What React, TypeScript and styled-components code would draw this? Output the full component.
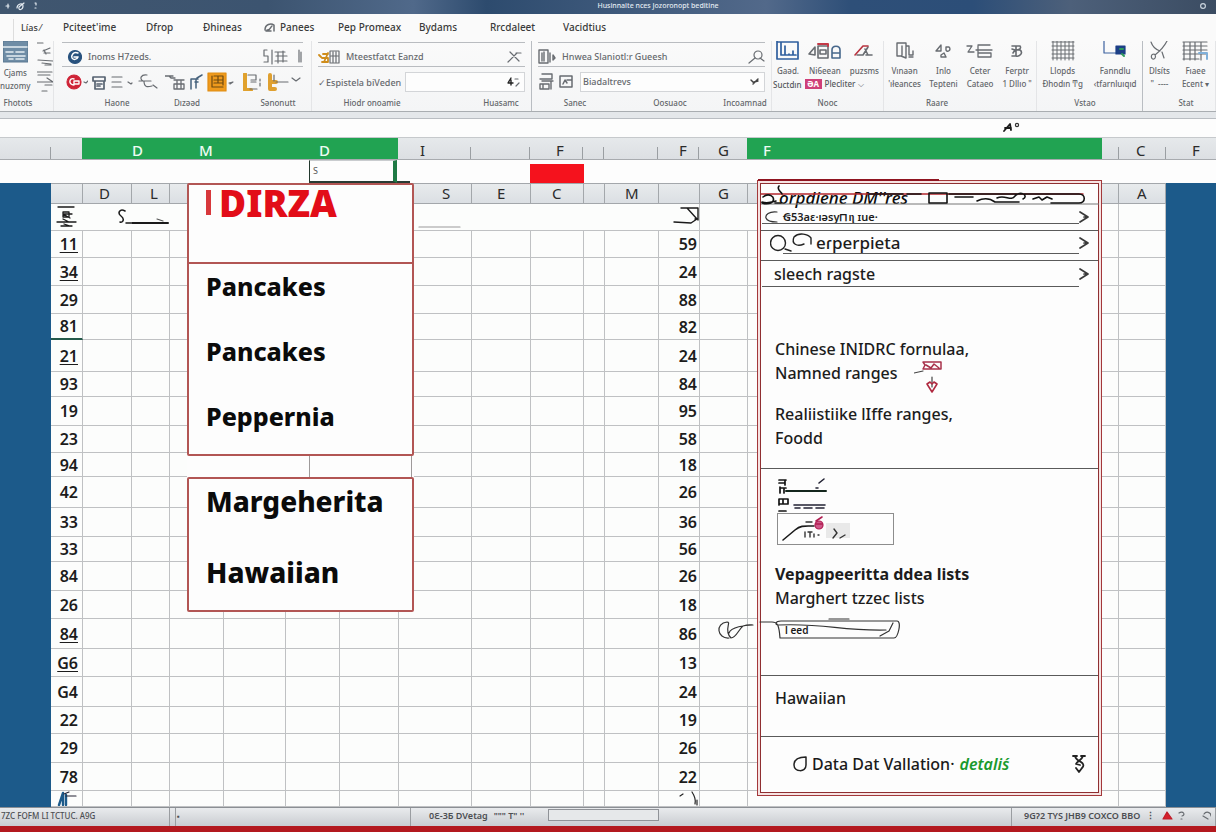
import React from "react";
import styled, { createGlobalStyle } from "styled-components";

const Global = createGlobalStyle`
  * { box-sizing: border-box; }
  body { margin: 0; background: #fcfcfc; font-family: "Noto Sans", "Open Sans", sans-serif; color: #1a1a1a; }
  button, input { font: inherit; color: inherit; }
  svg { display: block; }
`;

const Page = styled.div`
  display: flex;
  flex-direction: column;
  min-height: 100vh;
  overflow: hidden;
`;

/* ---------- title bar ---------- */
const TitleBar = styled.header`
  height: 14px;
  display: flex;
  align-items: center;
  justify-content: space-between;
  padding: 0 8px 2px 4px;
  background: linear-gradient(90deg, #40566f 0, #3c5470 22%, #50698a 34%, #2d4b6e 40%, #3d587a 50%, #52698a 63%, #2e4f78 70%, #2c4e78 80%, #4d607a 88%, #3b4c62 100%);
  color: #e4ebf2;
`;
const TitleText = styled.h1`
  flex: 1;
  margin: 0;
  padding-left: 80px;
  text-align: center;
  font-size: 7px;
  line-height: 12px;
  font-weight: 500;
`;

/* ---------- ribbon ---------- */
const Tabs = styled.nav`
  display: grid;
  grid-template-columns: 14px 49px 83px 57px 61px 74px 81px 71px 73px 1fr;
  height: 27px;
  align-items: center;
  background: #fafafa;
`;
const Tab = styled.button<{ $faint?: boolean }>`
  display: flex;
  align-items: center;
  gap: 4px;
  padding: 0 0 0 ${(p) => (p.$faint ? 7 : 0)}px;
  border: 0;
  background: none;
  text-align: left;
  white-space: nowrap;
  font-size: ${(p) => (p.$faint ? 9 : 10)}px;
  line-height: 27px;
  font-weight: 500;
  color: #3a3a3a;
`;
const TabEdge = styled.span`
  height: 22px;
  border-right: 1px solid #ddd;
  align-self: end;
`;

const Ribbon = styled.section`
  display: flex;
  height: 71px;
  background: linear-gradient(#fafafa, #f4f5f6);
  border-bottom: 1px solid #a9adb1;
`;
const Group = styled.div<{ $w?: number; $line?: boolean }>`
  flex: ${(p) => (p.$w ? `0 0 ${p.$w}px` : "1 1 0")};
  min-width: 0;
  display: flex;
  flex-direction: column;
  border-right: 1px solid ${(p) => (p.$line ? "#b9bdc2" : "#e4e5e7")};
  overflow: hidden;
`;
const Body = styled.div<{ $pad?: number }>`
  height: 55px;
  padding: 1px ${(p) => p.$pad ?? 6}px 0;
  display: flex;
  flex-direction: column;
  gap: 4px;
`;
const Captions = styled.div<{ $cols?: string; $lead?: number }>`
  display: grid;
  grid-template-columns: ${(p) => p.$cols ?? "1fr"};
  padding-left: ${(p) => p.$lead ?? 0}px;
  text-align: center;
  font-size: 8px;
  line-height: 16px;
  font-weight: 500;
  color: #63666a;
  white-space: nowrap;
`;
const Line = styled.div<{ $box?: boolean }>`
  display: flex;
  align-items: center;
  gap: 4px;
  height: ${(p) => (p.$box ? 25 : 22)}px;
  padding-top: ${(p) => (p.$box ? 4 : 0)}px;
  border: 0 solid #b9bcc0;
  border-width: ${(p) => (p.$box ? "1px 0" : "0")};
  font-size: 9px;
  font-weight: 500;
  color: #66696d;
  white-space: nowrap;
`;
const Field = styled.input`
  flex: 1;
  width: 0;
  min-width: 0;
  height: 18px;
  padding: 0 2px;
  border: 0;
  background: transparent;
  font-size: 9px;
  line-height: 18px;
`;
const FieldBox = styled.div`
  flex: 1;
  min-width: 0;
  display: flex;
  align-items: center;
  height: 20px;
  padding-right: 3px;
  border: 1px solid #d3d5d8;
  background: #fdfdfd;
`;
const Tool = styled.button`
  flex: none;
  display: flex;
  padding: 0;
  border: 0;
  background: none;
`;
const BigTools = styled.div<{ $short?: boolean }>`
  display: flex;
  justify-content: space-around;
  height: ${(p) => (p.$short ? 37 : 55)}px;
`;
const BigTool = styled.button`
  display: flex;
  flex-direction: column;
  align-items: center;
  padding: 0;
  border: 0;
  background: none;
  font-size: 8px;
  line-height: 13px;
  font-weight: 500;
  color: #63666a;
  white-space: nowrap;
  & > svg { margin-bottom: 3px; }
`;
const SubLine = styled.div`
  display: flex;
  align-items: center;
  gap: 3px;
  height: 18px;
  padding: 0 0 4px 1px;
  font-size: 8px;
  font-weight: 500;
  color: #55585c;
  white-space: nowrap;
`;
const Pink = styled.span`
  width: 17px;
  height: 10px;
  background: #cf3f78;
  color: #fff;
  line-height: 10px;
  text-align: center;
  font-weight: 700;
`;
const Clip = styled.div`
  display: flex;
  gap: 6px;
  height: 55px;
`;

/* ---------- sheet ---------- */
const Strip = styled.div`
  height: 7px;
  background: #e4e7ea;
  border-bottom: 1px solid #b9bdc2;
`;
const FormulaBar = styled.div`
  display: flex;
  justify-content: flex-end;
  height: 19px;
  padding-right: 196px;
  background: #fdfdfd;
  border-bottom: 1px solid #c6c9cc;
`;
const TopHeads = styled.div`
  display: flex;
  height: 22px;
  background: linear-gradient(#e6e9eb, #dcdfe3);
  border-bottom: 1px solid #a8abaf;
`;
const TopHead = styled.div<{ $w?: number; $inset?: number; $green?: boolean; $tick?: boolean }>`
  flex: ${(p) => (p.$w ? `0 0 ${p.$w}px` : "1 1 0")};
  padding-left: ${(p) => p.$inset ?? 0}px;
  font-size: 15px;
  line-height: 24px;
  font-weight: ${(p) => (p.$green ? 500 : 400)};
  color: ${(p) => (p.$green ? "#eefbf2" : "#2b2b2b")};
  background: ${(p) =>
    p.$green ? "#21a352" : p.$tick ? "linear-gradient(#9a9ea2, #9a9ea2) right bottom / 1px 12px no-repeat" : "none"};
`;
const EntryRow = styled.div`
  display: flex;
  height: 23px;
  padding-left: 309px;
  background: #fdfdfd;
`;
const ActiveCell = styled.div`
  width: 88px;
  padding-left: 3px;
  border-style: solid;
  border-width: 1px 4px 2px 1px;
  border-color: #c9cccf #1f7a45 #2a3b33 #23382d;
  font-size: 9px;
  line-height: 20px;
  color: #555;
`;
const ActiveEdge = styled.span`
  align-self: flex-end;
  width: 13px;
  height: 2px;
  background: #2a3b33;
`;
const RedCell = styled.span`
  width: 54px;
  height: 19px;
  margin: 4px 0 0 120px;
  background: #f5121d;
`;

const Desk = styled.main`
  position: relative;
  display: grid;
  grid-template-columns: 51px 1fr 50px;
  background: #1c5a8a;
`;
const Sheet = styled.table`
  grid-column: 2;
  width: 100%;
  table-layout: fixed;
  border-collapse: separate;
  border-spacing: 0;
  background: #fcfdfc;
`;
const HeadCell = styled.th<{ $inset?: number }>`
  height: 20px;
  padding: 0 0 0 ${(p) => p.$inset ?? 0}px;
  text-align: left;
  font-size: 15px;
  line-height: 19px;
  font-weight: 400;
  color: #2b2b2b;
  background: linear-gradient(#e8ebed, #dbdfe3);
  border: solid #a3a7ab;
  border-width: 1px 1px 1px 0;
`;
const Cell = styled.td<{ $h: number; $open?: boolean; $mark?: boolean }>`
  height: ${(p) => p.$h}px;
  padding: 0;
  border: solid #bfc1c3;
  border-width: 0 ${(p) => (p.$open ? 0 : 1)}px 1px 0;
  ${(p) => p.$mark && "border-bottom: 2px solid #24594a;"}
  text-align: right;
  line-height: 20px;
`;
const Num = styled.span<{ $under?: boolean; $side: "l" | "r" }>`
  display: block;
  padding-right: ${(p) => (p.$side === "l" ? 4 : 2)}px;
  font-size: 16px;
  line-height: 20px;
  font-weight: 600;
  color: #1c1c1c;
  text-decoration: ${(p) => (p.$under ? "underline" : "none")};
  text-underline-offset: 2px;
`;

/* ---------- list cards over the sheet ---------- */
const Lists = styled.div`
  position: absolute;
  left: 187px;
  top: 0;
  width: 227px;
`;
const Card = styled.section`
  background: #fdfdfd;
  border: 2px solid #b25654;
  border-radius: 2px;
`;
const CardTitle = styled.h2`
  display: flex;
  gap: 6px;
  height: 79px;
  margin: 0;
  padding-left: 17px;
  border-bottom: 2px solid #b25654;
  font-size: 37px;
  line-height: 35px;
  font-weight: 900;
  color: #e20d18;
`;
const Bar = styled.span`
  width: 5px;
  height: 25px;
  margin: 5px 2px 0 0;
  background: #d8383c;
`;
const Items = styled.ul<{ $h: number }>`
  display: flex;
  flex-direction: column;
  justify-content: space-between;
  height: ${(p) => p.$h}px;
  margin: 0;
  padding: 4px 0 20px 17px;
  list-style: none;
`;
const Item = styled.li<{ $large?: boolean }>`
  font-size: ${(p) => (p.$large ? 28 : 25)}px;
  line-height: 36px;
  font-weight: 800;
  color: #0b0b0b;
`;
const Between = styled.div`
  display: grid;
  grid-template-columns: 123px 102px 1fr;
  height: 21px;
  background: #fdfdfd;
  & > span { border-right: 1px solid #9e9a9a; }
`;

/* ---------- validation panel ---------- */
const Panel = styled.aside`
  position: absolute;
  right: 114px;
  top: -3px;
  width: 345px;
  height: 616px;
  padding: 2px;
  border: 1px solid #a3383a;
  background: #f6e3e2;
  &::before {
    content: "";
    position: absolute;
    left: 0;
    top: -2px;
    width: 181px;
    height: 2px;
    background: #8f1420;
  }
`;
const PanelInner = styled.div`
  height: 100%;
  border: 1px solid #8f2f31;
  background: #fdfdfd;
`;
const Doodle = styled.div`
  position: relative;
  height: 20px;
  white-space: nowrap;
  & > svg { position: absolute; left: 0; top: 0; }
`;
const Scrawl = styled.div`
  padding-left: 18px;
  font-size: 17px;
  line-height: 28px;
  font-weight: 500;
  font-style: italic;
  color: #0c0c0c;
`;
const Option = styled.button<{ $h: number; $pad: number; $kind?: "small" | "large" | "last" }>`
  position: relative;
  display: flex;
  align-items: center;
  gap: 4px;
  width: 100%;
  height: ${(p) => p.$h}px;
  padding: 0 8px ${(p) => (p.$kind === "large" ? 5 : 1)}px ${(p) => p.$pad}px;
  border: 0;
  border-bottom: ${(p) => (p.$kind === "last" ? "0" : "1px solid #5a5a5a")};
  background: none;
  text-align: left;
  font-size: ${(p) => (p.$kind === "small" ? 11 : p.$kind === "large" ? 17 : 16)}px;
  line-height: 20px;
  font-weight: ${(p) => (p.$kind === "small" ? 600 : 500)};
  color: #1c1c1c;
  & > span { flex: 1; }
  &::after {
    content: "";
    position: absolute;
    left: ${(p) => (p.$kind === "large" ? 22 : 1)}px;
    right: 19px;
    bottom: ${(p) => (p.$kind === "last" ? 0 : 6)}px;
    height: 1px;
    background: #5a5a5a;
  }
`;
const Block = styled.section<{ $h: number; $top?: number }>`
  height: ${(p) => p.$h}px;
  padding: ${(p) => p.$top ?? 0}px 0 0 14px;
  border-bottom: 1px solid #5a5a5a;
`;
const Text = styled.p<{ $bold?: boolean; $gap?: number }>`
  display: flex;
  align-items: flex-start;
  gap: 16px;
  margin: ${(p) => p.$gap ?? 0}px 0 0;
  height: 24px;
  font-size: 16px;
  line-height: 24px;
  font-weight: ${(p) => (p.$bold ? 700 : 500)};
  color: #1c1c1c;
  white-space: nowrap;
`;
const Preview = styled.div`
  width: 117px;
  height: 32px;
  margin-left: 2px;
  border: 1px solid #8d8d8d;
`;
const Tag = styled.div`
  position: relative;
  width: 128px;
  height: 22px;
  margin-top: 8px;
  padding-left: 10px;
  font-size: 10px;
  line-height: 24px;
  font-weight: 600;
  & > svg { position: absolute; left: -58px; top: -1px; }
`;
const Foot = styled.footer`
  display: flex;
  align-items: center;
  gap: 5px;
  height: 54px;
  padding: 0 11px 0 32px;
  font-size: 16px;
  font-weight: 500;
  white-space: nowrap;
  & > a { flex: 1; color: #1a9a2d; font-style: italic; font-weight: 600; text-decoration: none; }
`;

/* ---------- status bar ---------- */
const Status = styled.footer`
  display: flex;
  height: 19px;
  background: linear-gradient(#e9ebed, #c9ccd1);
  border-top: 1px solid #8b8f94;
  font-size: 8px;
  line-height: 16px;
  color: #4c4e52;
  white-space: nowrap;
`;
const Seg = styled.div<{ $w?: number; $strong?: boolean; $lead?: number }>`
  flex: ${(p) => (p.$w ? `0 0 ${p.$w}px` : "1 1 0")};
  display: flex;
  align-items: center;
  gap: 6px;
  padding: 0 0 3px ${(p) => p.$lead ?? 1}px;
  border-right: 1px solid #9a9da1;
  overflow: hidden;
  font-size: ${(p) => (p.$strong ? 9 : 8)}px;
  font-weight: ${(p) => (p.$strong ? 600 : 500)};
`;
const Track = styled.span`
  width: 111px;
  height: 12px;
  margin: 0 0 2px 18px;
  border: 1px solid #8f9297;
  background: #e6e8ea;
`;
const RedEdge = styled.div`
  flex: 1;
  min-height: 7px;
  background: #b3191f;
`;

/* ---------- drawings ---------- */
type DrawProps = { w: number; h: number; children: React.ReactNode };
const Draw = ({ w, h, children }: DrawProps) => (
  <svg width={w} height={h} viewBox={`0 0 ${w} ${h}`} fill="none" stroke="#686c71" strokeWidth="1.2" strokeLinecap="round" strokeLinejoin="round" aria-hidden="true">
    {children}
  </svg>
);
const Chevron = () => (
  <Draw w={12} h={14}><path d="M2 2 10 7 2 12M6 7h4" stroke="#3a3a3a" strokeWidth="1.7" /></Draw>
);

const topHeads = [
  { w: 51, tick: true }, { w: 31 },
  { w: 87, inset: 50, label: "D", green: true }, { w: 116, inset: 30, label: "M", green: true }, { w: 113, inset: 34, label: "D", green: true },
  { w: 73, inset: 22, label: "I", tick: true }, { w: 59, tick: true }, { w: 53, inset: 26, label: "F", tick: true },
  { w: 21, tick: true }, { w: 54, tick: true }, { w: 41, inset: 21, label: "F", tick: true }, { w: 48, inset: 19, label: "G" },
  { inset: 16, label: "F", green: true }, { w: 17, tick: true }, { w: 47, inset: 17, label: "C", tick: true }, { w: 50, inset: 26, label: "F" },
];
const columns: { w?: number; inset?: number; label?: string }[] = [
  { w: 32 }, { w: 49, inset: 16, label: "D" }, { w: 38, inset: 18, label: "L" }, { w: 54 }, { w: 62 }, { w: 54 }, { w: 59 },
  { w: 73, inset: 43, label: "S" }, { w: 59, inset: 25, label: "E" }, { w: 53, inset: 21, label: "C" }, { w: 21 },
  { w: 54, inset: 20, label: "M" }, { w: 41 }, { w: 48, inset: 18, label: "G" }, {}, { w: 47, inset: 18, label: "A" },
];
const rows: [number, string, string, boolean?][] = [
  [27, "11", "59", true], [28, "34", "24", true], [28, "29", "88"], [26, "81", "82"], [32, "21", "24", true], [25, "93", "84"],
  [29, "19", "95"], [27, "23", "58"], [24, "94", "18"], [31, "42", "26"], [29, "33", "36"], [25, "33", "56"], [29, "84", "26"],
  [28, "26", "18"], [30, "84", "86", true], [28, "G6", "13", true], [30, "G4", "24"], [27, "22", "19"], [29, "29", "26"], [28, "78", "22"],
];

export default function App() {
  return (
    <Page>
      <Global />
      <TitleBar>
        <Draw w={36} h={12}>
          <g stroke="#e4ebf2"><path d="M2 6h3M4 4v4M13 8c0-4 6-6 6-2s-5 5-4 1l5-4M31 3h1v2M31 8h1" /></g>
        </Draw>
        <TitleText>Husinnaite nces Jozoronopt beditine</TitleText>
        <Draw w={12} h={12}><circle cx="7" cy="6" r="2.4" stroke="#c8d2dc" /></Draw>
      </TitleBar>

      <Tabs>
        <TabEdge />
        <Tab $faint>Lías ⁄</Tab>
        <Tab>Pciteet'ime</Tab>
        <Tab>Dfrop</Tab>
        <Tab>Đhineas</Tab>
        <Tab>
          <Draw w={12} h={12}><path d="M1 8c0-6 6-7 9-5v6M3 8c3 1 4-4 5-4M2 9h5" strokeWidth="1.5" /></Draw>
          Panees
        </Tab>
        <Tab>Pep Promeax</Tab>
        <Tab>Bydams</Tab>
        <Tab>Rrcdaleet</Tab>
        <Tab>Vacidtius</Tab>
      </Tabs>

      <Ribbon>
        <Group $w={54}>
          <Clip>
            <BigTool>
              <Draw w={25} h={22}>
                <rect x="0" y="0" width="25" height="21" fill="#6f8da6" stroke="#5a7891" />
                <path d="M0 6h24M3 11h7M13 11h8M4 15h18M6 18h4M13 18h8" stroke="#e6eef4" strokeWidth="1.6" />
              </Draw>
              <span>Cjams</span>
              <span>nuzomy</span>
            </BigTool>
            <Tool aria-label="Clipboard actions">
              <Draw w={17} h={54}>
                <path d="M0 2h6M6 10l7-3M7 12h6M7 9l2 4M1 19l15 1M5 22l9 1M8 24h6M0 31h15M1 34h12M0 41h16M10 37l6 4M8 44h7M5 50h5" />
              </Draw>
            </Tool>
          </Clip>
          <Captions $cols="36px">Fhotots</Captions>
        </Group>

        <Group $w={258}>
          <Body $pad={8}>
            <Line $box>
              <Draw w={20} h={16}>
                <circle cx="13" cy="8" r="6.5" fill="#28527e" stroke="#28527e" />
                <path d="M16 4c-5-2-7 3-6 5s5 2 6-1h-4" stroke="#fff" strokeWidth="1.5" />
              </Draw>
              <Field aria-label="Font name" defaultValue="Inoms H7zeds." />
              <Tool aria-label="Field options">
                <Draw w={40} h={16}>
                  <path d="M4 1H1v6h4v6H1M9 1v14M12 3h10M13 7h11M15 3v11M12 12h12M20 2v11M36 1v12M38 3v10" />
                </Draw>
              </Tool>
            </Line>
            <Line>
              <Tool aria-label="Record">
                <Draw w={26} h={18}>
                  <circle cx="12" cy="9" r="7" fill="#cf2437" stroke="#cf2437" />
                  <path d="M12 6c-5-2-6 6 0 6M12 8h5v3h-5z" stroke="#fff" strokeWidth="1.4" />
                  <path d="M22 9l2 1 2-2" />
                </Draw>
              </Tool>
              <Tool aria-label="Calendar"><Draw w={14} h={16}><path d="M1 3h12v4H1zM3 7v8h9V8M5 10h5M5 12h3" stroke="#566270" strokeWidth="1.7" /></Draw></Tool>
              <Tool aria-label="List"><Draw w={23} h={16}><path d="M2 3h10M2 8h9M2 13h10M18 8l3 2 1-1" /></Draw></Tool>
              <Tool aria-label="Erase"><Draw w={24} h={18}><path d="M10 2c-6-1-8 4-4 6M2 8h12M7 8c0 7 4 6 8 5M16 12l4 3" /></Draw></Tool>
              <Tool aria-label="Paste"><Draw w={20} h={18}><path d="M0 3h8M4 3l2 2h4M9 7h10M9 11h10v5H9zM12 8v7M16 8v7" strokeWidth="1.3" /></Draw></Tool>
              <Tool aria-label="Format"><Draw w={14} h={18}><path d="M2 16V6h7M3 6h4v9M6 9h3M8 5l5-3" stroke="#45617c" strokeWidth="1.5" /></Draw></Tool>
              <Tool aria-label="Fill">
                <Draw w={32} h={20}>
                  <rect x="1" y="1" width="18" height="18" fill="#ef9a1d" stroke="#e08d15" />
                  <path d="M5 4v11h11M7 4h9v9M7 8h9M7 11h9M11 4v7" stroke="#6f4a10" />
                  <path d="M22 11l4-1-3 2" />
                </Draw>
              </Tool>
              <Tool aria-label="Border"><Draw w={20} h={18}><path d="M2 1v16h6" stroke="#e0a12d" strokeWidth="4" /><path d="M5 2h8v5H8M8 9h5M7 16h7M17 6v2M17 10v3" /></Draw></Tool>
              <Tool aria-label="Shade"><Draw w={34} h={18}><path d="M3 2v14h5M3 9h6" stroke="#dfa030" strokeWidth="4" /><path d="M7 2v6M9 9h12M25 5l4 3 4-3" /></Draw></Tool>
            </Line>
          </Body>
          <Captions $lead={28} $cols="70px 70px 112px"><span>Haone</span><span>Dızəəd</span><span>Sənonutt</span></Captions>
        </Group>

        <Group $w={220} $line>
          <Body>
            <Line $box>
              <Draw w={22} h={16}>
                <path d="M1 6l2 2M5 5h5M4 9h6v4H4M10 4l-4 9" stroke="#cf8d1c" strokeWidth="1.8" />
                <path d="M12 2h9v12h-9zM15 3v10M18 3v10M13 7h7" />
              </Draw>
              <Field aria-label="Insert source" defaultValue="Mteestfatct Eanzd" />
              <Tool aria-label="Edit"><Draw w={18} h={16}><path d="M1 13 10 4M3 3l9 9M9 4h5" /></Draw></Tool>
            </Line>
            <Line>
              <label htmlFor="lookup">✓Espistela biVeden</label>
              <FieldBox>
                <Field id="lookup" defaultValue="" />
                <Draw w={14} h={12}><path d="M4 2 1 7h5M4 4v5" stroke="#222" strokeWidth="1.4" /><path d="M8 3h3M9 10l3-3" /></Draw>
              </FieldBox>
            </Line>
          </Body>
          <Captions $cols="120px 138px"><span>Hiodr onoamie</span><span>Huasamc</span></Captions>
        </Group>

        <Group $w={240}>
          <Body>
            <Line $box>
              <Draw w={18} h={16}><path d="M1 1h9v13H1zM4 4v8M6 3v9M12 4v9M15 6v5l2-2z" strokeWidth="1.4" /></Draw>
              <Field aria-label="Search" defaultValue="Hnwea Slaniotl:r Gueesh" />
              <Tool aria-label="Find"><Draw w={18} h={16}><circle cx="11" cy="6" r="4" /><path d="M8 9 2 14M13 9l4 3" /></Draw></Tool>
            </Line>
            <Line>
              <Tool aria-label="Print"><Draw w={16} h={18}><path d="M4 1h10v5H2M4 8h11M2 11h9v5H2zM5 11v4M13 8v8" strokeWidth="1.4" /></Draw></Tool>
              <Tool aria-label="Layout"><Draw w={18} h={16}><path d="M2 2h12v11H2zM5 10l2-4 2 3M9 6h4" strokeWidth="1.5" /></Draw></Tool>
              <FieldBox>
                <Field aria-label="Rules" defaultValue="Biadaltrevs" />
                <Draw w={12} h={12}><path d="M2 4l3 3M4 8l5-5M5 6l4-1" stroke="#444" strokeWidth="1.5" /></Draw>
              </FieldBox>
            </Line>
          </Body>
          <Captions $cols="86px 104px 46px"><span>Sanec</span><span>Oosuaoc</span><span>Incoamnad</span></Captions>
        </Group>

        <Group $w={112}>
          <BigTools $short>
            <BigTool>
              <Draw w={24} h={20}><path d="M1 0v18h21V1H1M5 1v13h15M9 14V5M13 13v1M17 10v4" stroke="#2f5f9e" strokeWidth="1.7" /></Draw>
              <span>Gaəd.</span>
            </BigTool>
            <BigTool>
              <Draw w={34} h={20}>
                <path d="M1 13l6-7v8zM10 5h10v12H10zM12 9h6v4h-6z" strokeWidth="1.6" />
                <path d="M10 3h10v2" stroke="#c43947" strokeWidth="2" />
                <path d="M24 17V9c0-5 8-5 8 0v8zM24 12h8v5h-8z" stroke="#47688c" strokeWidth="1.6" />
              </Draw>
              <span>Ni6eean</span>
            </BigTool>
            <BigTool>
              <Draw w={22} h={20}><path d="M4 14h6l5-8M13 14h6M12 8l3 6" strokeWidth="1.6" /><path d="M2 14l8-9h5" stroke="#b8333f" strokeWidth="1.6" /></Draw>
              <span>puzsms</span>
            </BigTool>
          </BigTools>
          <SubLine>
            <span>Suctdın</span>
            <Pink>ƏA</Pink>
            <span>Plecliter ⌵</span>
          </SubLine>
          <Captions>Nooc</Captions>
        </Group>

        <Group>
          <BigTools>
            <BigTool><Draw w={20} h={20}><path d="M2 2h9v15l-5-2H2zM11 5h3v9h4v-4M7 5v9M14 16h4" strokeWidth="1.4" /></Draw><span>Vınaən</span><span>'ıłeances</span></BigTool>
            <BigTool><Draw w={18} h={20}><path d="M1 10l5-6v6zM11 6h3c3 3-2 6-3 3zM6 14l3-2 2 4H6z" strokeWidth="1.4" /></Draw><span>Inlo</span><span>Tepteni</span></BigTool>
            <BigTool><Draw w={28} h={20}><path d="M1 5h5L2 11h6M12 4h12M10 9h16M12 12h13v4H12zM12 5v7" strokeWidth="1.3" /></Draw><span>Ceter</span><span>Cataeo</span></BigTool>
            <BigTool><Draw w={16} h={20}><path d="M3 5h8c2 3-2 4-5 4h5c4 3-1 7-4 6H3M3 8l3 1-2 3M7 5v10" strokeWidth="1.6" /></Draw><span>Ferptr</span><span>1 Dllıo "</span></BigTool>
          </BigTools>
          <Captions $cols="106px">Raare</Captions>
        </Group>

        <Group $w={106} $line>
          <BigTools>
            <BigTool><Draw w={24} h={20}><path d="M1 1h22M1 5h22M1 9h22M1 13h22M1 17h22M2 0v19M6 0v19M10 0v19M14 0v19M18 0v19M22 0v19" strokeWidth="1" /></Draw><span>Llopds</span><span>Đhodın Ͳg</span></BigTool>
            <BigTool>
              <Draw w={26} h={20}>
                <path d="M2 0v12h12" stroke="#3d62a0" />
                <rect x="14" y="5" width="9" height="8" fill="#1c3f86" stroke="#1c3f86" />
                <path d="M18 8h3M20 13l2 2" stroke="#2f9c5b" strokeWidth="2" />
              </Draw>
              <span>Fanndlu</span><span>‹tfarnluıqıd</span>
            </BigTool>
          </BigTools>
          <Captions $cols="96px">Vstao</Captions>
        </Group>

        <Group $w={73}>
          <BigTools>
            <BigTool><Draw w={20} h={20}><path d="M2 1c2 6 6 8 9 9M18 0c-3 6-7 10-12 14M5 13c-4 0-3 6 0 5 2-1 2-4 0-5M13 11l2 6" /></Draw><span>Dlsíts</span><span>"&nbsp; ----</span></BigTool>
            <BigTool>
              <Draw w={26} h={20}><path d="M1 1h24M1 5h24M1 9h24M1 13h24M1 18h16M2 1v18M8 1v18M13 1v18M19 1v18" /><path d="M17 12h8v6" stroke="#7fb0da" strokeWidth="2" /></Draw>
              <span>Fıaee</span><span>Ecent ▾</span>
            </BigTool>
          </BigTools>
          <Captions $cols="86px">Stat</Captions>
        </Group>
      </Ribbon>

      <Strip />
      <FormulaBar>
        <Draw w={20} h={16}><path d="M4 12 10 5l1 6M5 9h6" stroke="#1b1b1b" strokeWidth="1.8" /><circle cx="17" cy="6" r="1.6" stroke="#333" /></Draw>
      </FormulaBar>

      <TopHeads>
        {topHeads.map((c, i) => (
          <TopHead key={i} $w={c.w} $inset={c.inset} $green={c.green} $tick={c.tick}>{c.label}</TopHead>
        ))}
      </TopHeads>
      <EntryRow>
        <ActiveCell>S</ActiveCell>
        <ActiveEdge />
        <RedCell />
      </EntryRow>

      <Desk>
        <Sheet>
          <colgroup>
            {columns.map((c, i) => <col key={i} width={c.w} />)}
          </colgroup>
          <thead>
            <tr>{columns.map((c, i) => <HeadCell key={i} $inset={c.inset}>{c.label}</HeadCell>)}</tr>
          </thead>
          <tbody>
            <tr>
              {columns.map((_, i) => (
                <Cell key={i} $h={27} $open={i !== 12 && i < 14}>
                  {i === 0 && (
                    <Draw w={26} h={24}><path d="M7 2h16M12 7h6v5h-6zM13 9h8M6 17h19M12 14l6 3M10 21h11M13 19l6 2M12 9l7 4" stroke="#1a1a1a" strokeWidth="1.3" /></Draw>
                  )}
                  {i === 1 && (
                    <Draw w={49} h={26}><path d="M42 7c-5-3-8 2-4 5 4 3 2 7-1 6M43 19h6" stroke="#1a1a1a" strokeWidth="1.5" /></Draw>
                  )}
                  {i === 2 && (
                    <Draw w={38} h={26}><path d="M0 19h36" stroke="#1a1a1a" strokeWidth="2" /><path d="M25 15l6 2" stroke="#555" /></Draw>
                  )}
                  {i === 7 && <Draw w={62} h={26}><path d="M20 23h41" stroke="#999" /></Draw>}
                  {i === 12 && (
                    <Draw w={40} h={26}><path d="M22 4h17v12M28 4l10 11-6 4M15 18l17 1M36 15h3" stroke="#1a1a1a" strokeWidth="1.4" /></Draw>
                  )}
                </Cell>
              ))}
            </tr>
            {rows.map(([h, left, right, under], r) => (
              <tr key={r}>
                {columns.map((_, i) => (
                  <Cell key={i} $h={h} $mark={r === 3 && i === 0}>
                    {i === 0 && <Num $side="l" $under={under}>{left}</Num>}
                    {i === 12 && <Num $side="r">{right}</Num>}
                  </Cell>
                ))}
              </tr>
            ))}
            <tr>
              {columns.map((_, i) => (
                <Cell key={i} $h={16}>
                  {i === 0 && (
                    <Draw w={30} h={15}><path d="M8 14l4-12M12 14V3M15 14V4" stroke="#1c5a8a" strokeWidth="2.4" /><path d="M15 5h10M13 3l5-2" stroke="#223" /></Draw>
                  )}
                  {i === 12 && <Draw w={40} h={15}><path d="M21 5l3-2M33 1c2 3 4 8 3 12M38 9v5" stroke="#222" /></Draw>}
                </Cell>
              ))}
            </tr>
          </tbody>
        </Sheet>

        <Lists>
          <Card>
            <CardTitle><Bar />DIRZA</CardTitle>
            <Items $h={190}>
              <Item>Pancakes</Item>
              <Item>Pancakes</Item>
              <Item>Peppernia</Item>
            </Items>
          </Card>
          <Between><span /><span /></Between>
          <Card>
            <Items $h={131}>
              <Item $large>Margeherita</Item>
              <Item $large>Hawaiian</Item>
            </Items>
          </Card>
        </Lists>

        <Panel>
          <PanelInner>
            <Doodle>
              <Draw w={338} h={24}>
                <path d="M0 10h322" stroke="#b3262d" strokeWidth="1.4" />
                <path d="M0 20h338" stroke="#777" strokeWidth="1" />
                <path d="M2 13c6-5 12 0 10 4s-12 3-11 1c6 2 10 0 14-1M18 2c-3 4 3 6 3 8M14 19h6M168 9h18v10h-18zM188 10h130c7 0 7 9 0 9h-28M216 17c8-4 14-2 18 1h24M236 14c8-4 14 4 18-2 6-6 14 0 8 3M272 15l6-2 3 3 5-3 5 2M194 13h18M108 10h34M146 10h14" stroke="#111" strokeWidth="1.6" />
              </Draw>
              <Scrawl>orpdiene DM''res</Scrawl>
            </Doodle>
            <Option $h={27} $pad={4} $kind="small">
              <Draw w={14} h={14}><path d="M12 2C4 1 0 5 1 8s6 4 11 4" stroke="#333" /></Draw>
              <span>Ꞡ53aε·ıəsy⊓ıʅ ɪue·</span>
              <Chevron />
            </Option>
            <Option $h={30} $pad={9} $kind="large">
              <Draw w={42} h={22}>
                <circle cx="8" cy="11" r="7.5" stroke="#222" strokeWidth="1.4" />
                <path d="M24 5c5-5 14-3 17 1v6M24 5c-3 7 3 10 10 7M15 17l6 2" stroke="#222" strokeWidth="1.4" />
              </Draw>
              <span>eɾperpieta</span>
              <Chevron />
            </Option>
            <Option $h={26} $pad={13} $kind="last">
              <span>sleech ragste</span>
              <Chevron />
            </Option>
            <Block $h={182} $top={50}>
              <Text>Chinese INIDRC fornulaa,</Text>
              <Text>
                Namned ranges
                <Draw w={36} h={40}>
                  <path d="M9 1h18v7H9l2-4zM12 4l5 3 3-4 5 4" stroke="#a8324b" strokeWidth="1.5" />
                  <path d="M0 12l9-2M18 16v10" stroke="#444" />
                  <path d="M13 23l5 8 5-8-3-2-2 2-2-2z" stroke="#b02a41" strokeWidth="1.6" />
                </Draw>
              </Text>
              <Text $gap={17}>Realiistiike lIffe ranges,</Text>
              <Text>Foodd</Text>
            </Block>
            <Block $h={207} $top={8}>
              <Draw w={56} h={36}>
                <path d="M4 3h7M4 6h5M10 4v4M5 11h6M5 10v6M9 12v4M5 27h8v-5H4v6M8 22v5M4 34h7" stroke="#151515" strokeWidth="1.7" />
                <path d="M11 14h40" stroke="#14261d" strokeWidth="2" />
                <path d="M41 11h2M44 6l5-4M19 28h31M20 31h5M29 31h8M41 31h8" stroke="#223" strokeWidth="1.6" />
              </Draw>
              <Preview>
                <Draw w={115} h={30}>
                  <rect x="48" y="9" width="24" height="15" fill="#e9e9e9" stroke="none" />
                  <path d="M5 26l12-10c6-5 10-4 19-4" stroke="#1a1a1a" strokeWidth="1.6" />
                  <circle cx="41" cy="11" r="4" fill="#d0588a" stroke="#b01c50" />
                  <path d="M38 7l6-4M38 10h6" stroke="#b01c50" strokeWidth="1.6" />
                  <path d="M28 8h6M27 18v5M30 18h4M32 19v4M36 20v3M40 21h1M56 15l3 4-4 5M62 24l5-3" stroke="#333" strokeWidth="1.4" />
                </Draw>
              </Preview>
              <Text $bold $gap={17}>Vepagpeeritta ddea lists</Text>
              <Text>Marghert tzzec lists</Text>
              <Tag>
                l eed
                <Draw w={186} h={24}>
                  <path d="M12 21C0 22-2 6 10 5c5 0-4 8 4 16 5 0 8-9 12-12 6-2 8-1 10-1-8 0-22 2-24 8" stroke="#333" strokeWidth="1.2" />
                  <path d="M43 5h12c5 0 7 2 8 16h114c4 0 8-17 3-17H64c-6 0-6 4-3 4 50-2 60 6 108 5M163 19l9-5 4-8M112 2h20" stroke="#333" strokeWidth="1.2" />
                </Draw>
              </Tag>
            </Block>
            <Block $h={61} $top={10}>
              <Text>Hawaiian</Text>
            </Block>
            <Foot>
              <Draw w={14} h={16}><path d="M13 1v8c0 8-12 7-12 0 0-6 6-8 12-8z" stroke="#222" strokeWidth="1.5" /></Draw>
              <span>Data Dat Vallation·</span>
              <a href="#details">detaliś</a>
              <Tool aria-label="More">
                <Draw w={16} h={20}><path d="M2 2h4M10 2h4M4 2c1 4 4 5 6 6 3 2 3 4 1 6l-3 4-3-4M12 2c-1 4-6 5-7 8l4 1" stroke="#222" strokeWidth="1.8" /></Draw>
              </Tool>
            </Foot>
          </PanelInner>
        </Panel>
      </Desk>

      <Status>
        <Seg $w={170}>7ZC FOFM LI TCTUC. A9G</Seg>
        <Seg $w={6} />
        <Seg $w={235}>▪</Seg>
        <Seg $strong $lead={18}>
          <span>0Ɛ-3Б DVetag</span>
          <span>""" T" ''</span>
          <Track />
        </Seg>
        <Seg $w={204} $strong $lead={12}>
          <span>9GɁ2 TYS JHB9 COXCO BBO</span>
          <span>⋮</span>
          <Draw w={50} h={14}>
            <path d="M2 10l4-7 5 7z" fill="#d6202c" stroke="#c01c28" />
            <path d="M18 4c4-3 7 2 3 3M20 10h1M43 5c2-3 7-2 7 2M42 7l5 3" />
          </Draw>
        </Seg>
      </Status>
      <RedEdge />
    </Page>
  );
}
